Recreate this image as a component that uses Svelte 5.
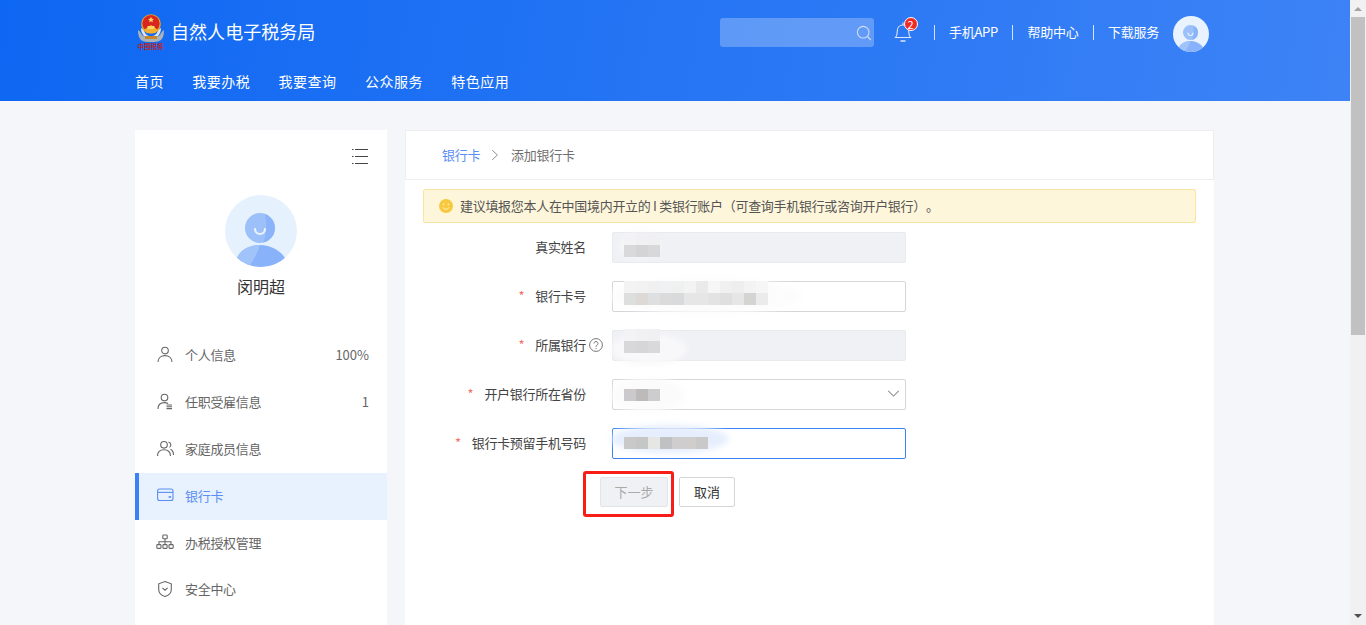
<script>
  const nav = ['首页', '我要办税', '我要查询', '公众服务', '特色应用'];
  const links = ['手机APP', '帮助中心', '下载服务'];
  const menu = [
    { icon: 'user', label: '个人信息', value: '100%' },
    { icon: 'job', label: '任职受雇信息', value: '1' },
    { icon: 'family', label: '家庭成员信息' },
    { icon: 'card', label: '银行卡', active: true },
    { icon: 'org', label: '办税授权管理' },
    { icon: 'shield', label: '安全中心' }
  ];
  const fields = [
    { label: '真实姓名', kind: 'disabled', smear: 'a', faint: ['#f3f3f5', '#f1f1f3', '#f0f0f2'], cells: ['#d9d9dc', '#d4d4d7', '#d8d8da'] },
    { label: '银行卡号', required: true, smear: 'b',
      faint: ['#f3f3f3', '#f2f2f2', '#f0f0f0', '#f0f1f2', '#eff0f0', '#f3f3f3', '#eaeaea', '#f6f6f6', '#f0f0f0', '#eeeeee', '#f3f3f3', '#f6f6f6'],
      cells: ['#dddede', '#dcd9d6', '#dedfe0', '#dbdbdb', '#d9dadb', '#e6e6e6', '#e6e6e6', '#e3e3e3', '#dfdfdf', '#e6e6e6', '#d4d4d2', '#ebebeb'] },
    { label: '所属银行', required: true, help: true, kind: 'disabled', smear: 'c', faint: ['#f3f3f5', '#f1f1f3', '#f0f0f2'], cells: ['#d8d8da', '#d6d6d8', '#d9d9db'] },
    { label: '开户银行所在省份', required: true, kind: 'select', smear: 'd', faint: [], cells: ['#cbc9cb', '#bdbaba', '#cdcdcf'] },
    { label: '银行卡预留手机号码', required: true, kind: 'focus', smear: 'e', faint: [], cells: ['#c9c9c9', '#c5c6c6', '#e6e7e4', '#c0c1c3', '#cfcdce', '#d0cecc', '#c9c9c9'] }
  ];
</script>

{#snippet avatar(bg)}
  <svg viewBox="0 0 72 72" class="avatar-svg">
    <defs>
      <clipPath id={'clip' + bg.slice(1)}><circle cx="36" cy="36" r="36" /></clipPath>
    </defs>
    <circle cx="36" cy="36" r="36" fill={bg} />
    <g clip-path={'url(#clip' + bg.slice(1) + ')'}>
      <circle cx="35" cy="33" r="15" fill="#9cc0fa" />
      <path d="M40 18.900A15 15 0 0 1 38 47.700C42 38 42 28 40 18.900Z" fill="#8ab3f9" />
      <path d="M30 34a5 5 0 0 0 10 0" fill="none" stroke="#eaf3ff" stroke-width="2.200" stroke-linecap="round" />
      <path d="M12 63C15 55 25 50 35 50S55 55 60 63V72H12Z" fill="#88b2f9" />
      <path d="M12 63C15 55 25 50 35 50C33 56 29 66 23 72H12Z" fill="#a0c3fa" />
    </g>
  </svg>
{/snippet}

{#snippet menuIcon(name)}
  <svg viewBox="0 0 18 18" class="menu-icon" fill="none" stroke="currentColor" stroke-width="1.100">
    {#if name === 'user'}
      <circle cx="8" cy="4.600" r="3.300" />
      <path d="M1 16c0-4 3-6.400 7-6.400s7 2.400 7 6.400" />
    {:else if name === 'job'}
      <circle cx="7.500" cy="4.600" r="3.300" />
      <path d="M1 16c0-4 2.600-6.400 6.500-6.400 1.400 0 2.600.3 3.600.9" />
      <path d="M9.500 12h5.500M9.500 13.800h5.500M9.500 15.600h5.500" />
    {:else if name === 'family'}
      <circle cx="7" cy="4.800" r="3.300" />
      <path d="M.5 16c0-4 2.800-6.200 6.500-6.200s6.500 2.200 6.500 6.200" />
      <path d="M11.500 2a3 3 0 0 1 1 5.400M13.500 9.300c2 .9 3 3 3 5.700" />
    {:else if name === 'card'}
      <rect x=".6" y="3" width="15.400" height="11.500" rx="2" />
      <path d="M.6 6.400h15.400" />
      <rect x="11.600" y="10.200" width="2.600" height="1.600" fill="currentColor" stroke="none" />
    {:else if name === 'org'}
      <rect x="5.800" y="2" width="4.400" height="3.800" rx=".8" />
      <rect x="-.2" y="11.600" width="4.200" height="3.800" rx=".8" />
      <rect x="5.900" y="11.600" width="4.200" height="3.800" rx=".8" />
      <rect x="12" y="11.600" width="4.200" height="3.800" rx=".8" />
      <path d="M8 5.800v5.800M2 11.600V8.800h12v2.800" />
    {:else}
      <path d="M8 1.600l6.300 2.200v5.600c0 3.600-2.800 5.900-6.300 7.200-3.500-1.300-6.300-3.600-6.300-7.200V3.800Z" />
      <path d="M5.400 7.800 8 10.200l2.600-2.400" />
    {/if}
  </svg>
{/snippet}

<div class="screen">
  <div class="page">
    <header class="header">
      <div class="top">
        <div class="brand">
          <div class="emblem">
            <svg viewBox="0 0 30 28" class="emblem-svg">
              <path d="M2 16c2 1 3 3 4 5 2 2 5 3 9 3s7-1 9-3c1-2 2-4 4-5 0 5-1 8-3 10-3 2-6 2-10 2s-7 0-10-2c-2-2-3-5-3-10Z" fill="#aab3ba" />
              <path d="M5 14c0 6 4 11 10 11s10-5 10-11l-3 2c-1 4-3 6-7 6s-6-2-7-6Z" fill="#dfe3e6" />
              <circle cx="15" cy="10" r="9.800" fill="#e9a526" />
              <circle cx="15" cy="9.500" r="8.600" fill="#d9241f" />
              <path d="M8.500 15.500 15 11l6.500 4.500-2 3.500h-9Z" fill="#f3b02e" />
              <path d="M11.500 15v-3h7v3Z" fill="#f9d765" />
              <path d="M15 2.800l.9 2 2.100.2-1.600 1.300.5 2L15 7.300l-1.900 1 .5-2L12 5l2.100-.2Z" fill="#f9d765" />
              <path d="M9 22h12v3H9Z" fill="#c8872b" />
            </svg>
            <span class="emblem-text">中国税务</span>
          </div>
          <span class="title">自然人电子税务局</span>
        </div>
        <div class="tools">
          <div class="search">
            <svg viewBox="0 0 16 16" class="search-icon" fill="none" stroke="#cfdcf3" stroke-width="1.100">
              <circle cx="7.200" cy="7.200" r="5.800" />
              <path d="M11.500 11.500 14.800 15" />
            </svg>
          </div>
          <div class="bell">
            <svg viewBox="0 0 18 22" class="bell-icon" fill="none" stroke="#dfe9fb" stroke-width="1.100">
              <path d="M1.500 16.500c1.300-1.500 1.800-3 1.800-6.500 0-3.700 2.400-6 5.700-6s5.700 2.300 5.700 6c0 3.500.5 5 1.800 6.500Z" />
              <path d="M9 1.500V4" />
              <path d="M6.500 20h5" stroke-width="1.500" />
            </svg>
            <span class="badge">2</span>
          </div>
          {#each links as link}
            <span class="sep"></span>
            <span class="link">{link}</span>
          {/each}
          <div class="top-avatar">{@render avatar('#e9f3ff')}</div>
        </div>
      </div>
      <nav class="nav">
        {#each nav as item}<span>{item}</span>{/each}
      </nav>
    </header>

    <div class="body">
      <aside class="side">
        <div class="toggle">
          <svg viewBox="0 0 16 15" class="toggle-icon" fill="#444">
            <rect x="0" y="0" width="1.500" height="1" /><rect x="3" y="0" width="13" height="1" />
            <rect x="0" y="7" width="1.500" height="1" /><rect x="3" y="7" width="13" height="1" />
            <rect x="0" y="14" width="1.500" height="1" /><rect x="3" y="14" width="13" height="1" />
          </svg>
        </div>
        <div class="side-avatar">{@render avatar('#e6f1fe')}</div>
        <div class="name">闵明超</div>
        <ul class="menu">
          {#each menu as m}
            <li class:active={m.active}>
              {@render menuIcon(m.icon)}
              <span class="menu-label">{m.label}</span>
              {#if m.value}<span class="menu-value">{m.value}</span>{/if}
            </li>
          {/each}
        </ul>
      </aside>

      <main class="main">
        <div class="crumb">
          <span class="crumb-link">银行卡</span>
          <svg viewBox="0 0 10 14" class="crumb-sep" fill="none" stroke="#808080" stroke-width="1.100"><path d="M1.500 1 8 7l-6.500 6" /></svg>
          <span class="crumb-current">添加银行卡</span>
        </div>
        <div class="alert">
          <svg viewBox="0 0 14 14" class="smile">
            <circle cx="7" cy="7" r="7" fill="#f8c93e" />
            <circle cx="4.600" cy="5.400" r=".8" fill="#fff3c6" /><circle cx="9.400" cy="5.400" r=".8" fill="#fff3c6" />
            <path d="M4 8.300a3.200 3.200 0 0 0 6 0" fill="none" stroke="#fff3c6" stroke-width=".9" />
          </svg>
          <span class="alert-text">建议填报您本人在中国境内开立的 I 类银行账户（可查询手机银行或咨询开户银行）。</span>
        </div>
        <form class="form">
          {#each fields as f}
            <div class="row">
              <div class="label">
                {#if f.required}<span class="star">*</span>{/if}
                <span>{f.label}</span>
                {#if f.help}
                  <svg viewBox="0 0 14 14" class="help" fill="none" stroke="#666" stroke-width=".9">
                    <circle cx="7" cy="7" r="6.400" />
                    <path d="M5 5.400a2 2 0 1 1 3 1.800c-.7.4-1 .8-1 1.600" />
                    <circle cx="7" cy="10.500" r=".6" fill="#666" stroke="none" />
                  </svg>
                {/if}
              </div>
              <div class="input {f.kind ?? ''}">
                <span class="smear {f.smear}"></span>
                <div class="mosaic m-{f.smear}">
                  {#if f.faint.length}
                    <div class="cells faint">
                      {#each f.faint as c}<i style:background={c}></i>{/each}
                    </div>
                  {/if}
                  <div class="cells">
                    {#each f.cells as c}<i style:background={c}></i>{/each}
                  </div>
                </div>
                {#if f.kind === 'select'}
                  <svg viewBox="0 0 14 8" class="chevron" fill="none" stroke="#909090" stroke-width="1.200"><path d="M1 1l6 6 6-6" /></svg>
                {/if}
              </div>
            </div>
          {/each}
          <div class="actions">
            <div class="highlight"><button type="button" class="btn next" disabled>下一步</button></div>
            <button type="button" class="btn">取消</button>
          </div>
        </form>
      </main>
    </div>
  </div>
  <div class="scrollbar">
    <span class="arrow up"></span>
    <span class="thumb"></span>
    <span class="arrow down"></span>
  </div>
</div>

<style>
  :global(body) { margin: 0; overflow: hidden; }
  .screen {
    display: flex; width: 1366px; height: 625px; overflow: hidden;
    font-family: "Noto Sans CJK SC", "Liberation Sans", sans-serif;
    font-size: 13px; color: #333; letter-spacing: -0.3px; text-spacing-trim: space-all;
  }
  .page { flex: 1; min-width: 0; background: #f4f6fa; }
  .header {
    height: 101px; box-sizing: border-box; padding: 16px 141px 0 135px;
    background: linear-gradient(100deg, #0e67f2 0%, #3d83f6 100%); color: #fff;
  }
  .top { display: flex; justify-content: space-between; align-items: center; height: 36px; }
  .brand { display: flex; align-items: center; gap: 5px; margin-top: -3px; }
  .emblem { display: flex; flex-direction: column; align-items: center; width: 31px; }
  .emblem-svg { width: 30px; height: 28px; display: block; }
  .emblem-text { font-size: 6.500px; line-height: 9px; color: #b4262e; font-weight: 700; white-space: nowrap; letter-spacing: 0; }
  .title { font-size: 18px; line-height: 32px; letter-spacing: 0.050px; padding-bottom: 3px; }
  .tools { display: flex; align-items: center; }
  .search {
    width: 154px; height: 29px; box-sizing: border-box; border-radius: 3px; background: rgba(255,255,255,.26);
    display: flex; align-items: center; justify-content: flex-end; padding-right: 2px; margin-top: -3px;
  }
  .search-icon { width: 16px; height: 16px; }
  .bell { position: relative; width: 18px; height: 22px; margin: -4px 22px 0 20px; }
  .bell-icon { width: 18px; height: 22px; display: block; }
  .badge {
    position: absolute; left: 10px; top: -4px; width: 14px; height: 14px; border-radius: 50%;
    background: #f02b25; border: 1px solid #fff; box-sizing: border-box;
    color: #fff; font-size: 11px; line-height: 12px; text-align: center; letter-spacing: 0;
  }
  .sep { width: 1px; height: 15px; background: rgba(255,255,255,.8); margin: -4px 14.500px 0 0; }
  .link { margin: -5px 14.150px 0 0; white-space: nowrap; font-size: 13px; }
  .top-avatar { width: 36px; height: 36px; }
  .avatar-svg { display: block; width: 100%; height: 100%; }
  .nav { display: flex; gap: 28.300px; margin-top: 19px; font-size: 14px; line-height: 20px; letter-spacing: 0.500px; }

  .body { display: flex; gap: 18px; padding: 29px 136px 0 135px; }
  .side { width: 252px; height: 496px; background: #fff; flex: none; }
  .toggle { display: flex; justify-content: flex-end; padding: 19px 19px 0 0; height: 15px; }
  .toggle-icon { width: 16px; height: 15px; display: block; }
  .side-avatar { width: 72px; height: 72px; margin: 31px auto 0; }
  .name { text-align: center; font-size: 16px; line-height: 24px; margin-top: 7px; color: #333; letter-spacing: 0; }
  .menu { list-style: none; margin: 34.600px 0 0; padding: 0; }
  .menu li {
    display: flex; align-items: center; height: 46.800px; box-sizing: border-box;
    padding: 0 18px 0 22px; color: #666;
  }
  .menu li.active { background: #e7f2fe; color: #5b8ef5; border-left: 4px solid #3b82f6; padding-left: 18px; }
  .menu-icon { width: 18px; height: 18px; margin-right: 10px; flex: none; position: relative; top: -1px; overflow: visible; }
  .menu-label, .menu-value { padding-bottom: 2px; }
  .menu-value { margin-left: auto; letter-spacing: 0; }

  .main { flex: 1; min-width: 0; height: 496px; background: #fff; }
  .crumb {
    display: flex; align-items: center; height: 50px; box-sizing: border-box; padding-left: 36px;
    border: 1px solid #eeeeee; gap: 11px; background: #fff;
  }
  .crumb-link, .crumb-current { padding-bottom: 2px; }
  .crumb-link { color: #5b8ef5; }
  .crumb-sep { width: 8px; height: 12px; }
  .crumb-current { color: #707070; margin-left: 1px; }
  .alert {
    display: flex; align-items: center; gap: 7px; height: 34px; box-sizing: border-box;
    margin: 9px 18px 0; padding-left: 15px; background: #fef6da; border: 1px solid #f9e5a2; border-radius: 2px; color: #555;
  }
  .alert-text { padding-bottom: 2px; }
  .smile { width: 14px; height: 14px; flex: none; }
  .form { padding-top: 9px; }
  .row { display: flex; align-items: center; margin-bottom: 18px; height: 31px; }
  .label { width: 181px; display: flex; justify-content: flex-end; align-items: center; position: relative; color: #444; padding-bottom: 2px; box-sizing: content-box; }
  .star { color: #f3705f; margin-right: 11px; font-size: 13px; }
  .help { position: absolute; left: 184px; top: 50%; margin-top: -8px; width: 14px; height: 14px; }
  .input {
    position: relative; margin-left: 26px; width: 294px; height: 31px; box-sizing: border-box;
    border: 1px solid #d4d6da; border-radius: 2px; background: #fff;
  }
  .input.disabled { background: #f0f1f5; border-color: #e9eaee; }
  .input.focus { border-color: #3b82f6; }
  .smear { position: absolute; filter: blur(3px); border-radius: 50%; }
  .smear.a { left: 6px; top: 0; width: 42px; height: 26px; background: #f6f6f8; }
  .smear.b { left: -2px; top: -4px; width: 190px; height: 36px; background: #fcfcfc; }
  .smear.c { left: -2px; top: 2px; width: 76px; height: 32px; background: #f8f8fa; }
  .smear.d { left: -2px; top: -2px; width: 74px; height: 34px; background: #fbfbfb; }
  .smear.e { left: -2px; top: -4px; width: 118px; height: 28px; background: #e6eefd; }
  .mosaic { position: absolute; left: 11px; bottom: 5px; display: flex; flex-direction: column; }
  .mosaic.m-b { bottom: 6px; }
  .mosaic.m-c { bottom: 7px; }
  .mosaic.m-d { bottom: 8px; }
  .mosaic.m-e { bottom: 9px; }
  .cells { display: flex; height: 12px; }
  .cells i { display: block; width: 12px; height: 12px; }
  .chevron { position: absolute; right: 5px; top: 10px; width: 13px; height: 7px; }
  .actions { display: flex; align-items: flex-start; margin-top: -6px; padding-left: 178px; }
  .highlight { border: 3px solid #f81e18; border-radius: 3px; padding: 3px 3px 7px 14px; width: 91px; height: 46px; box-sizing: border-box; margin-right: 5px; }
  .btn {
    font: inherit; font-size: 13px; letter-spacing: 0; height: 30px; width: 56px; padding: 0 0 2px; border: 1px solid #d4d6da; border-radius: 2px;
    background: #fff; color: #333; margin-top: 6px;
  }
  .btn.next { width: 68px; margin: 0; background: #f0f1f5; color: #aaa; border-color: #e3e4e8; }

  .scrollbar { width: 16px; flex: none; background: #f1f1f1; display: flex; flex-direction: column; align-items: center; }
  .arrow { width: 0; height: 0; border-left: 4px solid transparent; border-right: 4px solid transparent; flex: none; margin: 7px 0 6px; }
  .arrow.up { border-bottom: 4px solid #a3a3a3; }
  .arrow.down { border-top: 4px solid #505050; margin-top: auto; margin-bottom: 7px; }
  .thumb { width: 14px; height: 318px; background: #c1c1c1; }
</style>
